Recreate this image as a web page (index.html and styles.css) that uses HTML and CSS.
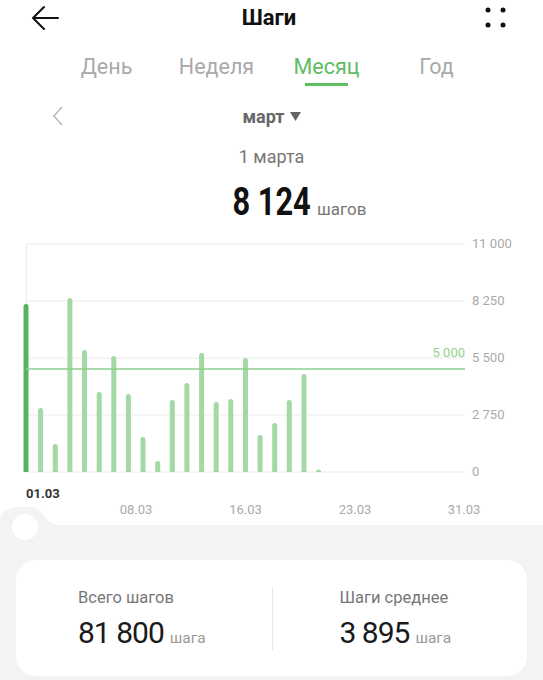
FILE: index.html
```html
<!DOCTYPE html>
<html lang="ru">
<head>
    <meta charset="UTF-8">
    <meta name="viewport" content="width=device-width, initial-scale=1.0">
    <title>Шаги</title>
    <link rel="stylesheet" href="styles.css">
</head>
<body>

    <div class="header">
        <svg class="back" width="28" height="26" viewBox="0 0 28 26">
            <path d="M27 13 H2 M13 2 L2 13 L13 24" fill="none" stroke="#111" stroke-width="2" stroke-linecap="round" stroke-linejoin="round"/>
        </svg>
        <h1>Шаги</h1>
        <svg class="more" width="22" height="22" viewBox="0 0 22 22">
            <circle cx="3" cy="3" r="2.5" fill="#111"/>
            <circle cx="18" cy="3" r="2.5" fill="#111"/>
            <circle cx="3" cy="18" r="2.5" fill="#111"/>
            <circle cx="18" cy="18" r="2.5" fill="#111"/>
        </svg>
    </div>

    <div class="tabs">
        <div class="tab">День</div>
        <div class="tab">Неделя</div>
        <div class="tab active">Месяц</div>
        <div class="tab">Год</div>
    </div>

    <div class="month-row">
        <svg class="prev" width="12" height="20" viewBox="0 0 12 20">
            <path d="M10 1 L2 10 L10 19" fill="none" stroke="#bbb" stroke-width="1.6"/>
        </svg>
        <div class="month">март<svg class="caret" width="11" height="9" viewBox="0 0 11 9"><path d="M0 0 H11 L5.5 9 Z" fill="#666"/></svg></div>
        <div></div>
    </div>

    <div class="day">1 марта</div>
    <div class="total">
        <div></div>
        <span class="total-num">8 124</span>
        <span class="total-unit">шагов</span>
    </div>

    <svg class="chart" width="543" height="295" viewBox="0 230 543 295">
        <defs>
            <clipPath id="plot">
                <rect x="0" y="230" width="543" height="242"/>
            </clipPath>
        </defs>

        <g class="grid">
            <line x1="26" y1="244" x2="465" y2="244"/>
            <line x1="26" y1="301" x2="465" y2="301"/>
            <line x1="26" y1="358" x2="465" y2="358"/>
            <line x1="26" y1="415" x2="465" y2="415"/>
            <line x1="26" y1="472" x2="465" y2="472"/>
            <line x1="26.5" y1="244" x2="26.5" y2="472"/>
        </g>

        <g class="y-labels">
            <text x="472" y="248">11 000</text>
            <text x="472" y="305">8 250</text>
            <text x="472" y="362">5 500</text>
            <text x="472" y="419">2 750</text>
            <text x="472" y="476">0</text>
        </g>

        <g class="bars" clip-path="url(#plot)">
            <rect class="current" x="23.5" y="304" width="5" height="171" rx="2.5"/>
            <rect x="38.1" y="408" width="5" height="67" rx="2.5"/>
            <rect x="52.8" y="444" width="5" height="31" rx="2.5"/>
            <rect x="67.4" y="298" width="5" height="177" rx="2.5"/>
            <rect x="82" y="350" width="5" height="125" rx="2.5"/>
            <rect x="96.7" y="392" width="5" height="83" rx="2.5"/>
            <rect x="111.3" y="356" width="5" height="119" rx="2.5"/>
            <rect x="125.9" y="394" width="5" height="81" rx="2.5"/>
            <rect x="140.5" y="437" width="5" height="38" rx="2.5"/>
            <rect x="155.2" y="461" width="5" height="14" rx="2.5"/>
            <rect x="169.8" y="400" width="5" height="75" rx="2.5"/>
            <rect x="184.4" y="383" width="5" height="92" rx="2.5"/>
            <rect x="199.1" y="353" width="5" height="122" rx="2.5"/>
            <rect x="213.7" y="402" width="5" height="73" rx="2.5"/>
            <rect x="228.3" y="399" width="5" height="76" rx="2.5"/>
            <rect x="243" y="358" width="5" height="117" rx="2.5"/>
            <rect x="257.6" y="435" width="5" height="40" rx="2.5"/>
            <rect x="272.2" y="423" width="5" height="52" rx="2.5"/>
            <rect x="286.8" y="400" width="5" height="75" rx="2.5"/>
            <rect x="301.5" y="374" width="5" height="101" rx="2.5"/>
            <rect x="316.1" y="469.5" width="5" height="6" rx="2.5"/>
        </g>

        <line class="goal" x1="26" y1="369" x2="465" y2="369"/>
        <text class="goal-label" x="465" y="357">5 000</text>

        <g class="x-labels">
            <text class="first" x="26" y="498">01.03</text>
            <text x="136" y="514">08.03</text>
            <text x="245.5" y="514">16.03</text>
            <text x="355" y="514">23.03</text>
            <text x="464" y="514">31.03</text>
        </g>
    </svg>

    <div class="summary">
        <svg class="knob" width="70" height="36" viewBox="0 0 70 36">
            <path d="M0 36 V14 C0 5 8 0 20 0 H30 C43 0 45 18 60 18 H70 V36 Z" fill="#f2f3f5"/>
            <circle cx="25" cy="20" r="13" fill="#fff"/>
        </svg>
        <div class="card">
            <div class="stat">
                <div class="stat-title">Всего шагов</div>
                <div class="stat-value">81 800<span class="stat-unit">шага</span></div>
            </div>
            <div class="stat">
                <div class="stat-title">Шаги среднее</div>
                <div class="stat-value">3 895<span class="stat-unit">шага</span></div>
            </div>
        </div>
    </div>

</body>
</html>
```

FILE: styles.css
```css
body {
    margin: 0;
    width: 543px;
    font-family: Roboto, "Noto Sans", sans-serif;
    background-color: #fff;
    color: #111;
}

/* Header */
.header {
    height: 36px;
    display: grid;
    grid-template-columns: 1fr auto 1fr;
    align-items: center;
    padding: 0 36px 0 31px;
}

.header h1 {
    margin: 0;
    font-size: 22px;
    font-weight: bold;
    line-height: 36px;
}

.back {
    display: block;
}

.more {
    display: block;
    justify-self: end;
}

/* Tabs */
.tabs {
    display: grid;
    grid-template-columns: repeat(4, 110px);
    justify-content: center;
    margin-top: 19px;
}

.tab {
    text-align: center;
    font-size: 21.5px;
    line-height: 24px;
    color: #aaa;
}

.tab.active {
    color: #5fbd64;
}

.tab.active::after {
    content: "";
    display: block;
    width: 43px;
    height: 3px;
    margin: 4px auto 0;
    background-color: #5fbd64;
}

/* Month selector */
.month-row {
    display: grid;
    grid-template-columns: 1fr auto 1fr;
    align-items: center;
    margin-top: 19px;
    height: 22px;
}

.prev {
    display: block;
    margin-left: 52px;
}

.month {
    font-size: 18px;
    font-weight: bold;
    color: #666;
    display: flex;
    align-items: center;
}

.caret {
    display: block;
    margin-left: 5px;
}

/* Day total */
.day {
    margin-top: 19px;
    text-align: center;
    font-size: 18px;
    line-height: 22px;
    color: #777;
}

.total {
    margin-top: 14px;
    height: 40px;
    line-height: 40px;
    display: grid;
    grid-template-columns: 1fr auto 1fr;
    align-items: baseline;
}

.total-num {
    display: inline-block;
    font-weight: bold;
    font-size: 39px;
    color: #111;
    transform: scaleX(0.79);
    margin: 0 -10px;
}

.total-unit {
    font-size: 17px;
    color: #777;
    margin-left: 6px;
}

/* Chart */
.chart {
    display: block;
    margin-top: 8px;
    font-family: Roboto, sans-serif;
}

.grid line {
    stroke: #ececec;
    stroke-width: 1;
}

.y-labels text {
    font-size: 13px;
    fill: #aaa;
}

.bars rect {
    fill: #a2d9a4;
}

.bars rect.current {
    fill: #58b45c;
}

.goal {
    stroke: #8bcf8e;
    stroke-width: 1.5;
}

.goal-label {
    font-size: 13px;
    fill: #8fd090;
    text-anchor: end;
}

.x-labels text {
    font-size: 13px;
    fill: #aaa;
    text-anchor: middle;
}

.x-labels text.first {
    fill: #333;
    font-weight: bold;
    text-anchor: start;
}

/* Summary */
.summary {
    position: relative;
    background-color: #f2f3f5;
    padding: 35px 16px 4px;
    height: 116px;
}

.knob {
    position: absolute;
    left: 0;
    top: -18px;
}

.card {
    height: 116px;
    background-color: #fff;
    border-radius: 20px;
    display: grid;
    grid-template-columns: 1fr 1fr;
    align-items: start;
}

.stat {
    padding: 28px 0 0 62px;
}

.stat + .stat {
    margin-top: 27px;
    padding: 1px 0 0 67px;
    height: 62px;
    border-left: 1px solid #e6e6e6;
}

.stat-title {
    font-size: 16.5px;
    color: #777;
    line-height: 20px;
}

.stat-value {
    font-size: 30px;
    letter-spacing: -1px;
    color: #1a1a1a;
    line-height: 40px;
    margin-top: 5px;
}

.stat-unit {
    font-size: 15.5px;
    letter-spacing: 0;
    color: #999;
    margin-left: 6px;
}
```
